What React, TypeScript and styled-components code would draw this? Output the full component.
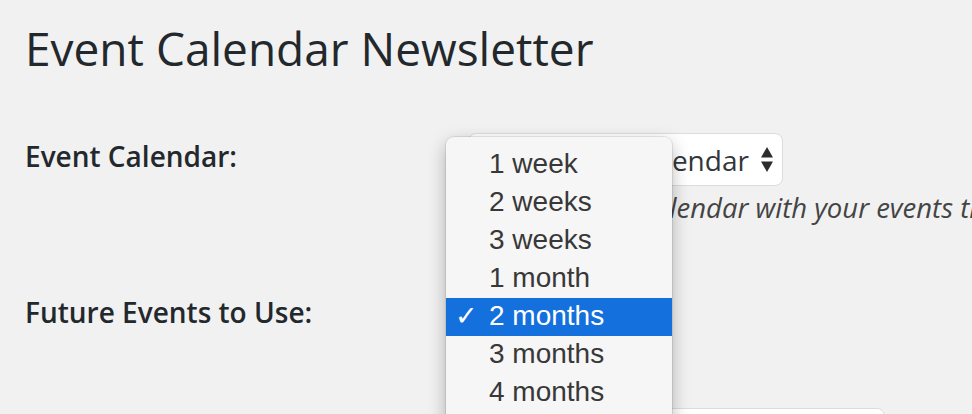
import React from "react"
import styled, { createGlobalStyle } from "styled-components"

const GlobalStyle = createGlobalStyle`
  html, body {
    margin: 0;
    padding: 0;
    background: #f1f1f1;
    overflow: hidden;
  }
  body {
    font-family: "Open Sans", "Noto Sans", sans-serif;
    color: #23282d;
  }
`

const Wrap = styled.div`
  position: relative;
  width: 972px;
  height: 414px;
  padding: 18px 0 0 25px;
  box-sizing: border-box;
  overflow: hidden;
`

const Title = styled.h1`
  margin: 0;
  font-size: 46px;
  line-height: 60px;
  font-weight: 400;
  color: #23282d;
`

const FormTable = styled.div`
  display: grid;
  grid-template-columns: 443px 1fr;
  margin-top: 55px;
`

const Label = styled.div<{ $gap?: number }>`
  font-size: 28px;
  line-height: 40px;
  font-weight: 600;
  padding-top: 3px;
  margin-top: ${({ $gap = 0 }) => $gap}px;
`

const Field = styled.div<{ $gap?: number }>`
  margin-top: ${({ $gap = 0 }) => $gap}px;
`

const SelectBox = styled.div<{ $width: number }>`
  display: flex;
  align-items: center;
  gap: 12px;
  width: ${({ $width }) => $width}px;
  height: 53px;
  box-sizing: border-box;
  padding: 0 9px 0 14px;
  background: #fff;
  border: 1px solid #dcdcdc;
  border-radius: 8px;
  font-size: 28px;
  color: #32373c;
  white-space: nowrap;

  svg {
    flex: 0 0 auto;
  }
`

const SelectText = styled.span`
  flex: 1;
`

const TextInput = styled.div`
  width: 417px;
  height: 56px;
  box-sizing: border-box;
  background: #fff;
  border: 1px solid #dcdcdc;
  border-radius: 8px;
`

const Description = styled.p`
  margin: 4px 0 0;
  font-size: 27.5px;
  line-height: 36px;
  font-style: italic;
  color: #444;
  white-space: nowrap;
`

const Menu = styled.ul`
  position: absolute;
  left: 446px;
  top: 137px;
  width: 226px;
  margin: 0;
  padding: 9px 0 0;
  list-style: none;
  background: #f6f6f6;
  border-radius: 8px 8px 0 0;
  box-shadow: 0 0 0 1px rgba(0, 0, 0, 0.08), 0 6px 18px rgba(0, 0, 0, 0.28);
  font-family: "Liberation Sans", Arial, sans-serif;
  font-size: 28px;
`

const MenuItem = styled.li<{ $active?: boolean }>`
  position: relative;
  height: 38px;
  line-height: 35px;
  padding-left: 43px;
  background: ${({ $active }) => ($active ? "#1470dc" : "transparent")};
  color: ${({ $active }) => ($active ? "#fff" : "#383838")};
  white-space: nowrap;
`

const Check = styled.span`
  position: absolute;
  left: 9px;
  top: 0;
  font-family: "DejaVu Sans", sans-serif;
  font-size: 27px;
  font-weight: 700;
`

const Arrows = () => (
  <svg width="12" height="25" viewBox="0 0 12 25">
    <path d="M6 0 L12 10.5 L0 10.5 Z" fill="#2c2c2c" />
    <path d="M0 14.5 L12 14.5 L6 25 Z" fill="#2c2c2c" />
  </svg>
)

const options = [
  "1 week",
  "2 weeks",
  "3 weeks",
  "1 month",
  "2 months",
  "3 months",
  "4 months",
  "5 months",
  "6 months",
]

export default function App() {
  return (
    <>
      <GlobalStyle />
      <Wrap>
        <Title>Event Calendar Newsletter</Title>
        <FormTable>
          <Label>Event Calendar:</Label>
          <Field>
            <SelectBox $width={315}>
              <SelectText>The Events Calendar</SelectText>
              <Arrows />
            </SelectBox>
            <Description>
              Choose which calendar with your events that you want to use
            </Description>
          </Field>

          <Label $gap={63}>Future Events to Use:</Label>
          <Field $gap={63}>
            <SelectBox $width={180}>
              <SelectText>2 months</SelectText>
              <Arrows />
            </SelectBox>
          </Field>

          <Label $gap={66}>Format:</Label>
          <Field $gap={66}>
            <TextInput />
          </Field>
        </FormTable>

        <Menu>
          {options.map((o) => (
            <MenuItem key={o} $active={o === "2 months"}>
              {o === "2 months" && <Check>✓</Check>}
              {o}
            </MenuItem>
          ))}
        </Menu>
      </Wrap>
    </>
  )
}
